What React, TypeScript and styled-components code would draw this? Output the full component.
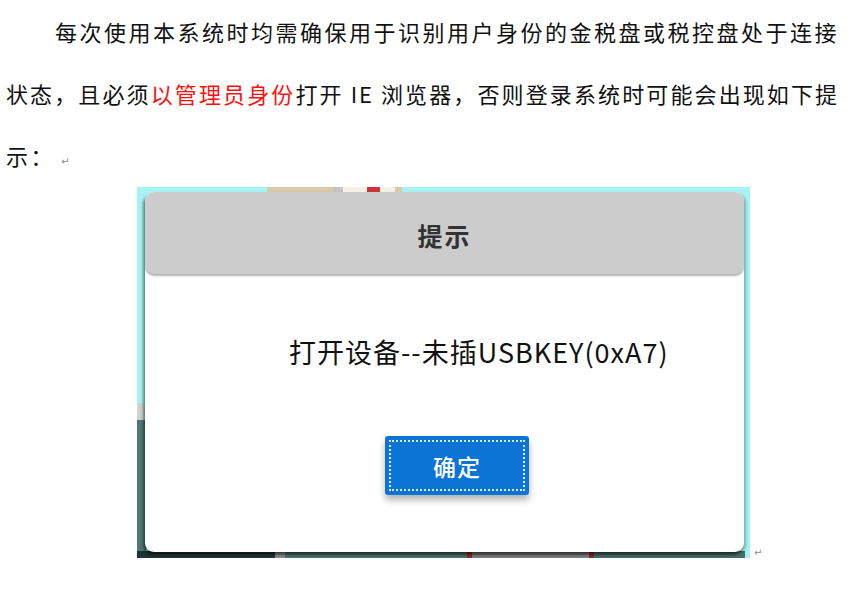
import styled, { createGlobalStyle } from 'styled-components';

const GlobalStyle = createGlobalStyle`
  html, body {
    margin: 0;
    padding: 0;
    background: #ffffff;
  }
  body {
    font-family: "Noto Sans CJK SC", "Noto Sans", sans-serif;
    color: #111;
  }
`;

const App = () => {
  return (
    <Page>
      <GlobalStyle />
      <Paragraph>
        <Line $indent $justify>每次使用本系统时均需确保用于识别用户身份的金税盘或税控盘处于连接</Line>
        <Line $justify $tight>
          状态，且必须<Red>以管理员身份</Red>打开 IE 浏览器，否则登录系统时可能会出现如下提
        </Line>
        <Line>
          示：<Mark>↵</Mark>
        </Line>
      </Paragraph>

      <FigureRow>
        <Backdrop>
          <Dialog>
            <Header>提示</Header>
            <Body>
              <Message>打开设备--未插USBKEY(0xA7)</Message>
              <OkButton>
                <OkInner>确定</OkInner>
              </OkButton>
            </Body>
          </Dialog>
        </Backdrop>
        <Mark $after>↵</Mark>
      </FigureRow>
    </Page>
  );
};

// 스타일
const Page = styled.div`
  width: 850px;
  height: 594px;
  overflow: hidden;
`;

const Paragraph = styled.div`
  width: 833px;
  padding-left: 6px;
  font-size: 22px;
  letter-spacing: 2.5px;
  line-height: 62px;
  color: #111;
`;

const Line = styled.div<{ $indent?: boolean; $justify?: boolean; $tight?: boolean }>`
  white-space: nowrap;
  padding-left: ${(p) => (p.$indent ? '49px' : '0')};
  letter-spacing: ${(p) => (p.$tight ? '1.9px' : '2.5px')};
  text-align: ${(p) => (p.$justify ? 'justify' : 'left')};
  text-align-last: ${(p) => (p.$justify ? 'justify' : 'left')};
`;

const Red = styled.span`
  color: #ff1010;
`;

const Mark = styled.span<{ $after?: boolean }>`
  font-family: "DejaVu Sans", sans-serif;
  font-size: 10px;
  letter-spacing: 0;
  color: #8a8a8a;
  margin-left: ${(p) => (p.$after ? '4px' : '6px')};
  line-height: 10px;
`;

const FigureRow = styled.div`
  display: flex;
  align-items: flex-end;
  margin-top: 1px;
  padding-left: 137px;
`;

const Backdrop = styled.div`
  width: 613px;
  height: 371px;
  box-sizing: border-box;
  padding: 5px 6px 6px 8px;
  background:
    linear-gradient(
        to right,
        transparent 130px,
        #d9c9a6 130px,
        #d9c9a6 196px,
        #c4c4c4 196px,
        #c4c4c4 206px,
        #f6f1e6 206px,
        #f6f1e6 230px,
        #cf3434 230px,
        #cf3434 243px,
        #f6f1e6 243px,
        #f6f1e6 258px,
        #d9c9a6 258px,
        #d9c9a6 265px,
        transparent 265px
      )
      top / 100% 6px no-repeat,
    linear-gradient(
        to right,
        #1f3532 0,
        #1f3532 138px,
        #8a8f8c 138px,
        #8a8f8c 148px,
        #4c7471 148px,
        #4c7471 330px,
        #8a2a22 330px,
        #8a2a22 335px,
        #7b7f7d 335px,
        #7b7f7d 452px,
        #8a2a22 452px,
        #8a2a22 457px,
        #456d6a 457px,
        #456d6a 608px,
        #a6f1f1 608px
      )
      bottom / 100% 7px no-repeat,
    linear-gradient(
        to bottom,
        transparent 216px,
        #c9d6cf 216px,
        #c9d6cf 233px,
        #4f7876 233px
      )
      left / 9px 100% no-repeat,
    #a7f2f2;
`;

const Dialog = styled.div`
  width: 599px;
  height: 360px;
  background: #ffffff;
  border-radius: 9px;
  box-shadow: -2px 3px 3px rgba(0, 0, 0, 0.45), 2px 2px 3px rgba(0, 0, 0, 0.25);
  display: flex;
  flex-direction: column;
  overflow: hidden;
`;

const Header = styled.div`
  height: 82px;
  flex-shrink: 0;
  background: #cccccc;
  border-radius: 9px;
  box-shadow: 0 2px 2px rgba(0, 0, 0, 0.3);
  display: flex;
  align-items: center;
  justify-content: center;
  font-size: 25px;
  font-weight: 700;
  letter-spacing: 2px;
  color: #333;
  padding-top: 4px;
  box-sizing: border-box;
`;

const Body = styled.div`
  display: flex;
  flex-direction: column;
  padding-top: 60px;
`;

const Message = styled.div`
  margin-left: 144px;
  font-size: 27px;
  line-height: 36px;
  letter-spacing: 1px;
  color: #111;
`;

const OkButton = styled.button`
  align-self: flex-start;
  margin: 66px 0 0 240px;
  width: 144px;
  height: 59px;
  padding: 4px;
  border: none;
  border-radius: 3px;
  background: #0b74d5;
  box-shadow: 0 5px 7px rgba(0, 0, 0, 0.3);
  cursor: pointer;
  box-sizing: border-box;
`;

const OkInner = styled.span`
  display: flex;
  align-items: center;
  justify-content: center;
  height: 100%;
  box-sizing: border-box;
  border: 2px dotted rgba(255, 255, 255, 0.85);
  font-family: "Noto Sans CJK SC", sans-serif;
  font-size: 23px;
  font-weight: 500;
  color: #ffffff;
  letter-spacing: 1px;
`;

export default App;
